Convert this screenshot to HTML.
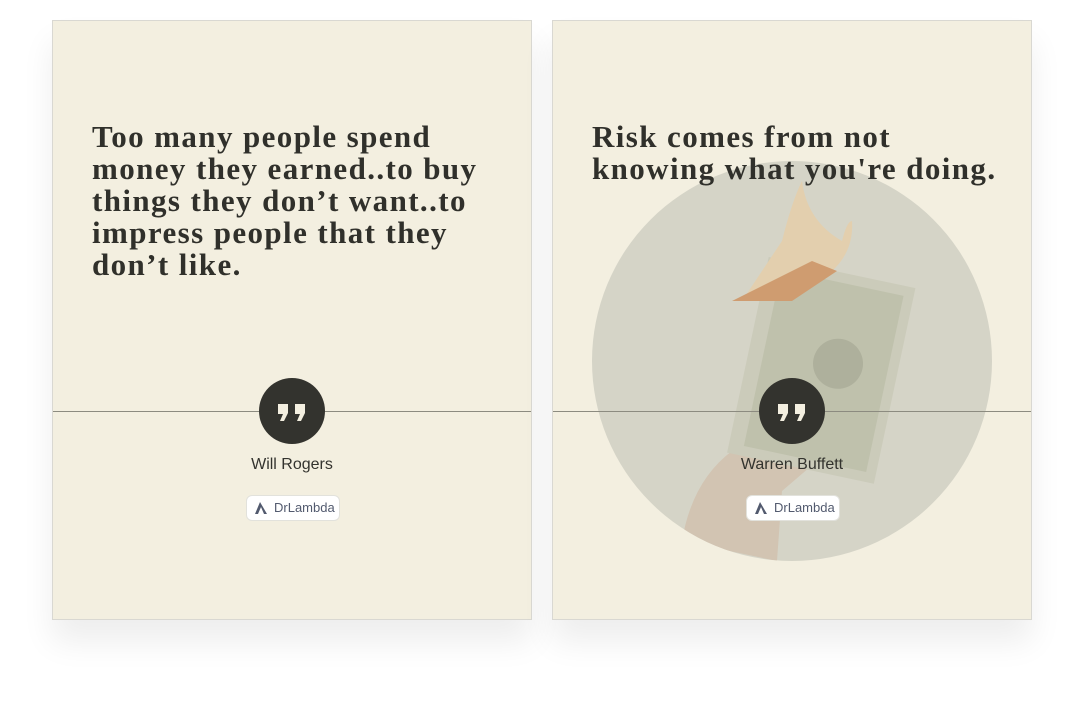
<!DOCTYPE html>
<html><head><meta charset="utf-8"><style>
html,body{margin:0;padding:0;background:#fff;width:1084px;height:704px;overflow:hidden;font-family:"Liberation Sans",sans-serif}
.card{position:absolute;top:20px;width:478px;height:598px;background:#f3efe0;border:1px solid #d9d8d2;box-shadow:0 22px 30px rgba(0,0,0,0.07);overflow:hidden}
.q{position:absolute;left:39px;top:100px;font-family:"Liberation Serif",serif;font-weight:bold;font-size:31px;line-height:32px;color:#30302b;white-space:nowrap;letter-spacing:1.4px;z-index:3}
.line{position:absolute;left:0;right:0;top:390px;height:1px;background:#8c8b80;z-index:2}
.qc{position:absolute;left:206px;top:357px;width:66px;height:66px;border-radius:50%;background:#33332e;z-index:3}
.name{position:absolute;left:0;right:0;top:435px;text-align:center;font-size:16px;color:#33332e;z-index:3}
.badge{position:absolute;left:193px;top:474px;width:92px;height:24px;background:#fff;border:1px solid #e2e2dc;border-radius:6px;z-index:3;font-size:13px;color:#525a6e;line-height:24px}
.badge span{position:absolute;left:27px;top:0}
.badge svg{position:absolute;left:7px;top:5px}
.circ{position:absolute;left:39px;top:140px;width:400px;height:400px;border-radius:50%;background:#d5d4c7;overflow:hidden;z-index:1}
</style></head><body>
<div class="card" style="left:52px">
<div class="q">Too many people spend<br>money they earned..to buy<br>things they don’t want..to<br>impress people that they<br>don’t like.</div>
<div class="line"></div>
<div class="qc"><svg width="66" height="66" viewBox="0 0 66 66"><path d="M19 26h10v9l-4 8h-4l3-7h-5z M36 26h10v9l-4 8h-4l3-7h-5z" fill="#f3efe0"/></svg></div>
<div class="name">Will Rogers</div>
<div class="badge"><svg width="14" height="14" viewBox="0 0 14 14"><path d="M6 1L1 13h3L7 6l3 7h3z" fill="#525a6e"/></svg><span>DrLambda</span></div>
</div>
<div class="card" style="left:552px">
<div class="circ"><svg width="400" height="400" viewBox="0 0 400 400">
<path d="M90 380 Q100 320 140 290 L200 270 Q230 280 225 300 L190 330 L185 400 Z" fill="#d2c4b2"/>
<g transform="rotate(12 230 230)"><rect x="150" y="110" width="150" height="200" fill="#cbcbba"/><rect x="165" y="120" width="125" height="180" fill="#bfc1ac"/><circle cx="240" cy="200" r="25" fill="#aeb09c"/></g>
<path d="M190 80 Q200 40 210 20 Q215 60 250 80 Q255 60 260 60 Q262 90 240 110 L150 140 Z" fill="#e3cfae"/>
<path d="M140 140 L220 100 L245 110 L200 140 Z" fill="#cf9c70"/>
</svg></div>
<div class="q" style="top:100px">Risk comes from not<br>knowing what you're doing.</div>
<div class="line"></div>
<div class="qc"><svg width="66" height="66" viewBox="0 0 66 66"><path d="M19 26h10v9l-4 8h-4l3-7h-5z M36 26h10v9l-4 8h-4l3-7h-5z" fill="#f3efe0"/></svg></div>
<div class="name">Warren Buffett</div>
<div class="badge"><svg width="14" height="14" viewBox="0 0 14 14"><path d="M6 1L1 13h3L7 6l3 7h3z" fill="#525a6e"/></svg><span>DrLambda</span></div>
</div>
</body></html>
